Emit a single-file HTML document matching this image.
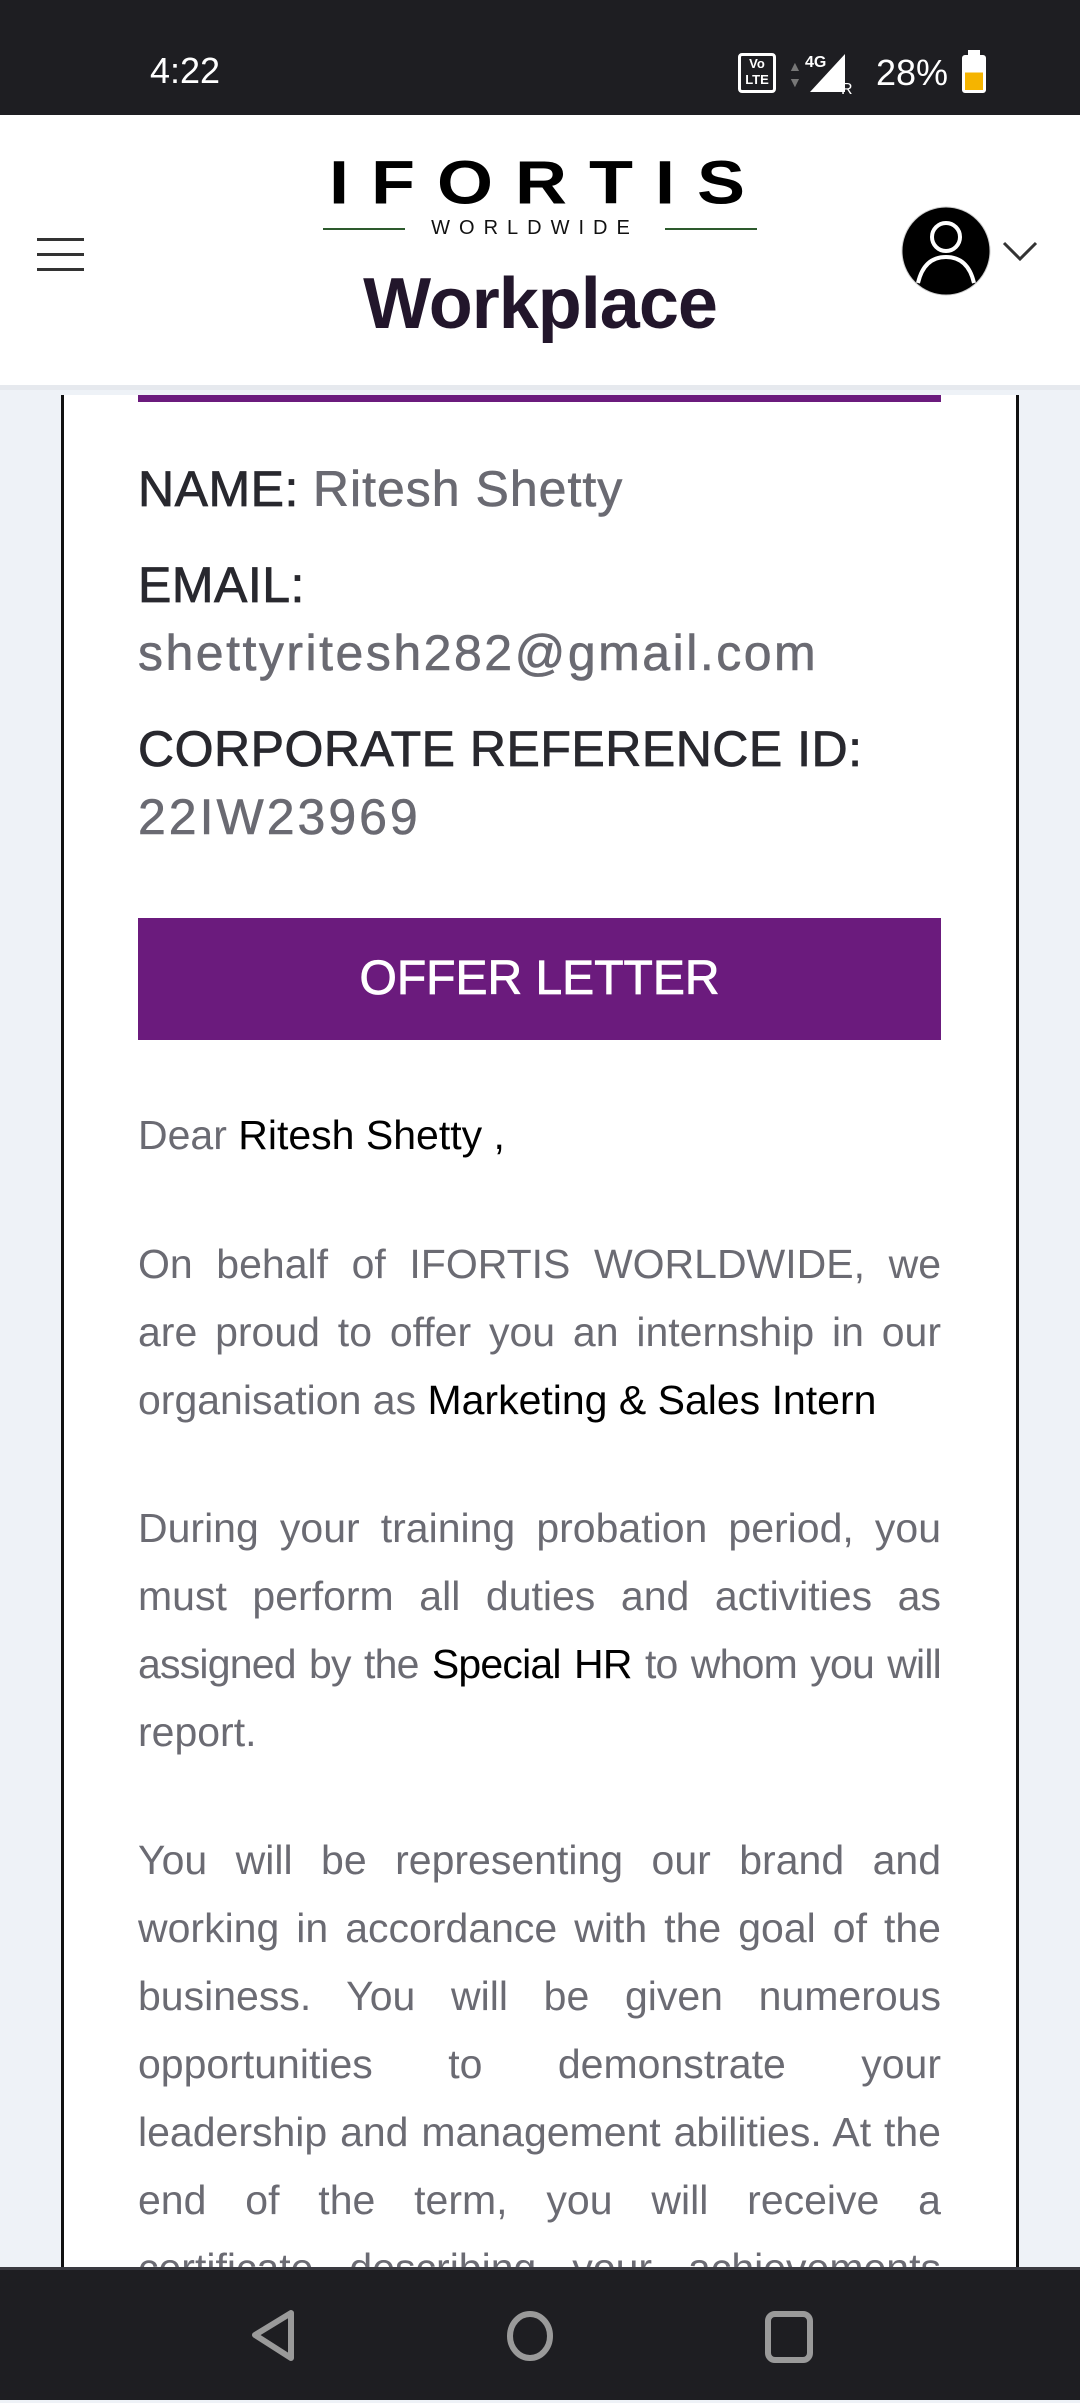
<!DOCTYPE html>
<html><head><meta charset="utf-8"><style>
*{margin:0;padding:0;box-sizing:border-box}
body{width:1080px;height:2400px;overflow:hidden;background:#eef2f7;font-family:"Liberation Sans",sans-serif;position:relative}
.abs{position:absolute}
#status{left:0;top:0;width:1080px;height:115px;background:#1e1e22;color:#fff}
#header{left:0;top:115px;width:1080px;height:275px;background:#fff;border-bottom:5px solid #e6e9ee}
#card{left:61px;top:395px;width:958px;height:1900px;background:#fff;border-left:3px solid #111;border-right:3px solid #111}
.lab{color:#28282e;font-size:50px;-webkit-text-stroke:0.8px #28282e;letter-spacing:0.5px}
.val{color:#6a6a72;font-size:50px;-webkit-text-stroke:0.6px #6a6a72}
.p{left:138px;width:803px;font-size:41px;line-height:68px;color:#6b6b73}
.p div{white-space:nowrap;height:68px}
.p .j{text-align:justify;text-align-last:justify;white-space:normal;overflow:hidden}
.p b{font-weight:normal;color:#000}
#nav{left:0;top:2267px;width:1080px;height:133px;background:#1e1e22;border-top:3px solid #3a3a40}
</style></head><body>
<div id="status" class="abs">
  <div class="abs" style="left:150px;top:50px;font-size:36px;">4:22</div>
  <div class="abs" style="left:738px;top:53px;width:38px;height:40px;border:3px solid #fff;border-radius:4px;font-size:13px;line-height:16px;text-align:center;font-weight:bold">Vo<br>LTE</div>
  <div class="abs" style="left:788px;top:58px;color:#777;font-size:14px;line-height:16px">▲<br>▼</div>
  <svg class="abs" style="left:805px;top:50px" width="50" height="45"><polygon points="5,42 40,4 40,42" fill="#fff"/><text x="0" y="17" fill="#fff" font-size="16" font-family="Liberation Sans" font-weight="bold">4G</text><text x="36" y="44" fill="#fff" font-size="16" font-family="Liberation Sans">R</text></svg>
  <div class="abs" style="left:876px;top:52px;font-size:36px;">28%</div>
  <div class="abs" style="left:962px;top:55px;width:24px;height:38px;border:3px solid #fff;border-radius:3px;background:linear-gradient(#fff 0 45%,#f5b400 45%)"></div>
  <div class="abs" style="left:968px;top:50px;width:12px;height:6px;background:#fff"></div>
</div>
<div id="header" class="abs">
  <div class="abs" style="left:37px;top:123px;width:47px;height:3px;background:#333"></div>
  <div class="abs" style="left:37px;top:138px;width:47px;height:3px;background:#333"></div>
  <div class="abs" style="left:37px;top:153px;width:47px;height:3px;background:#333"></div>
  <div class="abs" style="left:318px;top:34px;width:460px;text-align:center;font-size:72px;font-weight:bold;letter-spacing:22px;line-height:68px;color:#000;transform:scaleY(0.85)">IFORTIS</div>
  <div class="abs" style="left:323px;top:113px;width:82px;height:2px;background:#2d5a2d"></div>
  <div class="abs" style="left:665px;top:113px;width:92px;height:2px;background:#2d5a2d"></div>
  <div class="abs" style="left:405px;top:102px;width:260px;text-align:center;font-size:20px;letter-spacing:9px;color:#111">WORLDWIDE</div>
  <div class="abs" style="left:300px;top:148px;width:480px;text-align:center;font-size:72px;font-weight:bold;color:#22162b;letter-spacing:-1px">Workplace</div>
  <svg class="abs" style="left:900px;top:90px" width="145" height="95">
    <circle cx="46" cy="46" r="44" fill="#000" stroke="#ccc" stroke-width="1"/>
    <circle cx="46" cy="32" r="14" fill="none" stroke="#fff" stroke-width="4"/>
    <path d="M18 78 Q24 52 46 52 Q68 52 74 78" fill="none" stroke="#fff" stroke-width="4"/>
    <path d="M104 38 L120 54 L136 38" fill="none" stroke="#333" stroke-width="3"/>
  </svg>
</div>
<div id="card" class="abs"></div>
<div class="abs" style="left:138px;top:395px;width:803px;height:7px;background:#6b1b7d"></div>
<div class="abs" style="left:138px;top:460px;"><span class="lab">NAME:</span><span class="val" style="letter-spacing:1px;margin-left:14px">Ritesh Shetty</span></div>
<div class="abs lab" style="left:138px;top:556px;">EMAIL:</div>
<div class="abs val" style="left:138px;top:624px;letter-spacing:2.5px">shettyritesh282@gmail.com</div>
<div class="abs lab" style="left:138px;top:720px;">CORPORATE REFERENCE ID:</div>
<div class="abs val" style="left:138px;top:788px;letter-spacing:3px">22IW23969</div>
<div class="abs" style="left:138px;top:918px;width:803px;height:122px;background:#6b1b7d;color:#fff;font-size:48px;-webkit-text-stroke:0.8px #fff;text-align:center;line-height:122px">OFFER LETTER</div>
<div class="abs p" style="top:1101px"><div>Dear <b>Ritesh Shetty ,</b></div></div>
<div class="abs p" style="top:1230px">
<div class="j">On behalf of IFORTIS WORLDWIDE, we</div>
<div class="j">are proud to offer you an internship in our</div>
<div>organisation as <b>Marketing &amp; Sales Intern</b></div>
</div>
<div class="abs p" style="top:1494px">
<div class="j">During your training probation period, you</div>
<div class="j">must perform all duties and activities as</div>
<div class="j" style="letter-spacing:-0.8px;word-spacing:-2px">assigned by the <b>Special HR</b> to whom you will</div>
<div>report.</div>
</div>
<div class="abs p" style="top:1826px">
<div class="j">You will be representing our brand and</div>
<div class="j">working in accordance with the goal of the</div>
<div class="j">business. You will be given numerous</div>
<div class="j">opportunities to demonstrate your</div>
<div class="j">leadership and management abilities. At the</div>
<div class="j">end of the term, you will receive a</div>
<div class="j">certificate describing your achievements</div>
</div>
<div id="nav" class="abs">
  <svg class="abs" style="left:0;top:0" width="1080" height="133">
    <path d="M291 43 L291 88 L255 65 Z" fill="none" stroke="#9a9a9a" stroke-width="6" stroke-linejoin="round"/>
    <ellipse cx="530" cy="66" rx="20" ry="22" fill="none" stroke="#9a9a9a" stroke-width="6"/>
    <rect x="768" y="44" width="42" height="46" rx="7" fill="none" stroke="#9a9a9a" stroke-width="6"/>
  </svg>
</div>
</body></html>
